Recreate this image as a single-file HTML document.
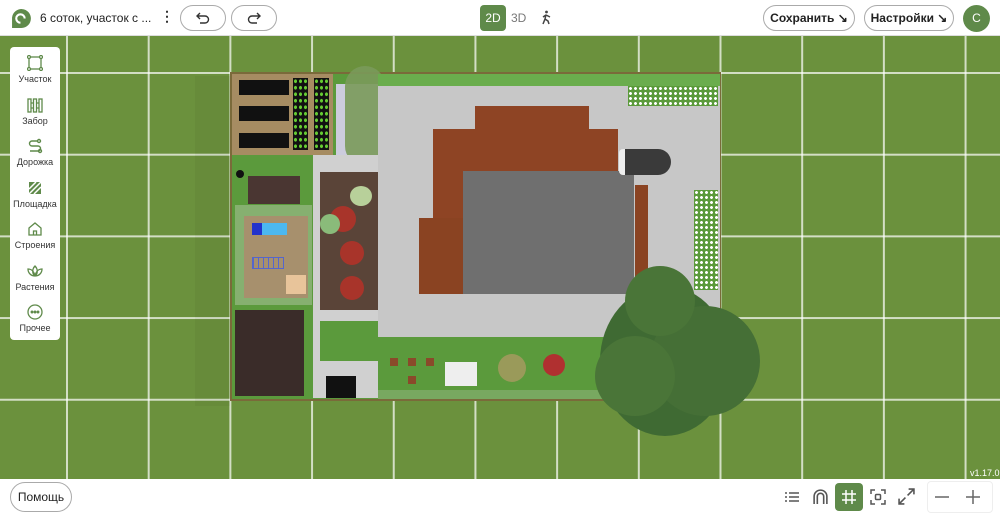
<!DOCTYPE html>
<html><head><meta charset="utf-8">
<style>
*{margin:0;padding:0;box-sizing:border-box}
body{width:1000px;height:515px;overflow:hidden;font-family:"Liberation Sans",sans-serif;background:#fff;position:relative}
.a{position:absolute}
#map{position:absolute;left:0;top:36px;width:1000px;height:443px;background-color:#6b913d;
background-image:linear-gradient(90deg,rgba(255,255,255,.7) 2px,transparent 2px),linear-gradient(rgba(255,255,255,.7) 2px,transparent 2px);
background-size:81.7px 81.7px;background-position:66px 36px}
.top{position:absolute;left:0;top:0;width:1000px;height:36px;background:#fff;border-bottom:1px solid #ddd}
.pill{position:absolute;border:1px solid #aaa;border-radius:14px;background:#fff;font-size:12px;font-weight:bold;color:#222;display:flex;align-items:center;justify-content:center}
.side{position:absolute;left:10px;top:47px;width:50px;height:293px;background:#fff;border-radius:4px}
.it{position:absolute;left:0;width:50px;text-align:center;font-size:9px;color:#333}
.it svg{display:block;margin:0 auto 3px}
.bot{position:absolute;left:0;top:479px;width:1000px;height:36px;background:#fff}
</style></head><body>
<div id="map">
 <div class="a" style="left:195px;top:40px;width:35px;height:330px;background:rgba(0,0,0,.035)"></div>
 <div class="a" style="left:230px;top:36px;width:491px;height:329px;background:#5b9a3c;border:2px solid #7a6a3a"></div>
 <div class="a" style="left:232px;top:38px;width:101px;height:81px;background:#a68c62"></div>
 <div class="a" style="left:239px;top:44px;width:50px;height:15px;background:#111"></div>
 <div class="a" style="left:239px;top:70px;width:50px;height:15px;background:#111"></div>
 <div class="a" style="left:239px;top:97px;width:50px;height:15px;background:#111"></div>
 <div class="a" style="left:293px;top:42px;width:15px;height:72px;background:#111;background-image:radial-gradient(#6c3 1.3px,transparent 1.6px);background-size:5px 6.5px"></div>
 <div class="a" style="left:314px;top:42px;width:15px;height:72px;background:#111;background-image:radial-gradient(#6c3 1.3px,transparent 1.6px);background-size:5px 6.5px"></div>
 <div class="a" style="left:336px;top:48px;width:42px;height:80px;background:#ccd;"></div>
 <div class="a" style="left:345px;top:30px;width:40px;height:100px;background:#7a9a5a;border-radius:20px;opacity:.9"></div>
 <div class="a" style="left:378px;top:38px;width:342px;height:14px;background:#6aad4d"></div>
 <div class="a" style="left:378px;top:50px;width:342px;height:251px;background:#c7c7c7"></div>
 <div class="a" style="left:628px;top:50px;width:90px;height:20px;background:#5a9a3a;background-image:radial-gradient(#fff 1.3px,transparent 1.6px);background-size:5px 5px"></div>
 <div class="a" style="left:694px;top:154px;width:24px;height:100px;background:#5a9a3a;background-image:radial-gradient(#fff 1.3px,transparent 1.6px);background-size:5px 5px"></div>
 <div class="a" style="left:475px;top:70px;width:114px;height:25px;background:#8e4424"></div>
 <div class="a" style="left:433px;top:93px;width:185px;height:42px;background:#8e4424"></div>
 <div class="a" style="left:433px;top:133px;width:31px;height:88px;background:#8e4424"></div>
 <div class="a" style="left:419px;top:182px;width:44px;height:76px;background:#8a4322"></div>
 <div class="a" style="left:635px;top:149px;width:13px;height:96px;background:#8a4322"></div>
 <div class="a" style="left:463px;top:135px;width:171px;height:123px;background:#6f6f6f"></div>
 <div class="a" style="left:619px;top:113px;width:52px;height:26px;background:#3a3a3a;border-radius:4px 13px 13px 4px;border-left:6px solid #eee"></div>
 <div class="a" style="left:248px;top:140px;width:52px;height:28px;background:#4a3632"></div>
 <div class="a" style="left:236px;top:134px;width:8px;height:8px;background:#111;border-radius:50%"></div>
 <div class="a" style="left:235px;top:169px;width:77px;height:100px;background:#86b070"></div>
 <div class="a" style="left:244px;top:180px;width:64px;height:82px;background:#a7906d"></div>
 <div class="a" style="left:252px;top:187px;width:35px;height:12px;background:#4cb8f0;border-left:10px solid #2233cc"></div>
 <div class="a" style="left:252px;top:221px;width:32px;height:12px;border:1px solid #5566cc;background:repeating-linear-gradient(90deg,#5566cc 0 1px,transparent 1px 5px)"></div>
 <div class="a" style="left:286px;top:239px;width:20px;height:19px;background:#e8c49a"></div>
 <div class="a" style="left:235px;top:274px;width:69px;height:86px;background:#3a2c29"></div>
 <div class="a" style="left:313px;top:119px;width:65px;height:243px;background:#d0d0d0"></div>
 <div class="a" style="left:320px;top:136px;width:58px;height:138px;background:#5a4438"></div>
 <div class="a" style="left:330px;top:170px;width:26px;height:26px;background:#a8342a;border-radius:50%"></div>
 <div class="a" style="left:340px;top:205px;width:24px;height:24px;background:#a8342a;border-radius:50%"></div>
 <div class="a" style="left:340px;top:240px;width:24px;height:24px;background:#a8342a;border-radius:50%"></div>
 <div class="a" style="left:350px;top:150px;width:22px;height:20px;background:#b8d09a;border-radius:50%"></div>
 <div class="a" style="left:320px;top:178px;width:20px;height:20px;background:#8abb7a;border-radius:50%"></div>
 <div class="a" style="left:320px;top:285px;width:58px;height:40px;background:#5b9a3c"></div>
 <div class="a" style="left:326px;top:340px;width:30px;height:22px;background:#111"></div>
 <div class="a" style="left:378px;top:301px;width:342px;height:54px;background:#5b9a3c"></div>
 <div class="a" style="left:378px;top:354px;width:240px;height:9px;background:#78a860"></div>
 <div class="a" style="left:445px;top:326px;width:32px;height:24px;background:#eee"></div>
 <div class="a" style="left:390px;top:322px;width:8px;height:8px;background:#8a4a2a"></div>
 <div class="a" style="left:408px;top:322px;width:8px;height:8px;background:#8a4a2a"></div>
 <div class="a" style="left:426px;top:322px;width:8px;height:8px;background:#8a4a2a"></div>
 <div class="a" style="left:408px;top:340px;width:8px;height:8px;background:#8a4a2a"></div>
 <div class="a" style="left:498px;top:318px;width:28px;height:28px;background:#9a9a5a;border-radius:50%"></div>
 <div class="a" style="left:543px;top:318px;width:22px;height:22px;background:#b03030;border-radius:50%"></div>
 <div class="a" style="left:600px;top:250px;width:130px;height:150px;background:#3f6a33;border-radius:50%"></div>
 <div class="a" style="left:650px;top:270px;width:110px;height:110px;background:#456f36;border-radius:50%"></div>
 <div class="a" style="left:595px;top:300px;width:80px;height:80px;background:#4a7538;border-radius:50%"></div>
 <div class="a" style="left:625px;top:230px;width:70px;height:70px;background:#4a7538;border-radius:50%"></div>
 <div class="a" style="left:970px;top:432px;font-size:9px;color:#fff">v1.17.0</div>
</div>

<div class="top">
 <svg class="a" style="left:11px;top:8px" width="21" height="21" viewBox="0 0 20 20"><path d="M1 19V9a9 9 0 1 1 9 10z" fill="#5f8a4a"/><path d="M9 14a4 4 0 1 1 4-4" stroke="#fff" stroke-width="2" fill="none"/></svg>
 <div class="a" style="left:40px;top:11px;font-size:12px;color:#222">6 соток, участок с ...</div>
 <div class="a" style="left:160px;top:8px;font-size:14px;font-weight:bold;color:#333">&#8942;</div>
 <div class="pill" style="left:180px;top:5px;width:46px;height:26px"><svg width="14" height="12" viewBox="0 0 14 12" fill="none" stroke="#333" stroke-width="1.4"><path d="M4 1L1 4l3 3M1 4h8a3.5 3.5 0 0 1 0 7H4"/></svg></div>
 <div class="pill" style="left:231px;top:5px;width:46px;height:26px"><svg width="14" height="12" viewBox="0 0 14 12" fill="none" stroke="#333" stroke-width="1.4"><path d="M10 1l3 3-3 3M13 4H5a3.5 3.5 0 0 0 0 7h5"/></svg></div>
 <div class="a" style="left:480px;top:5px;width:26px;height:26px;background:#5f8a4a;border-radius:4px;color:#fff;font-size:12px;text-align:center;line-height:26px">2D</div>
 <div class="a" style="left:511px;top:11px;font-size:12px;color:#777">3D</div>
 <svg class="a" style="left:540px;top:10px" width="12" height="15" viewBox="0 0 12 15" fill="none" stroke="#444" stroke-width="1.5"><circle cx="6.5" cy="2" r="1.4" fill="#444" stroke="none"/><path d="M6 4.5L5 9l-2 5M5 9l3 2 1 3M6 5l-3 2M6 5l4 2"/></svg>
 <div class="pill" style="left:763px;top:5px;width:92px;height:26px">Сохранить &#8600;</div>
 <div class="pill" style="left:864px;top:5px;width:90px;height:26px">Настройки &#8600;</div>
 <div class="a" style="left:963px;top:5px;width:27px;height:27px;border-radius:50%;background:#5f8a4a;color:#fff;font-size:12px;text-align:center;line-height:27px">C</div>
</div>

<div class="side">
 <div class="it" style="top:8px"><svg width="16" height="16" viewBox="0 0 16 16" fill="none" stroke="#5f8a4a" stroke-width="1.3"><rect x="2" y="2" width="12" height="12"/><circle cx="2" cy="2" r="1.5" fill="#fff"/><circle cx="14" cy="2" r="1.5" fill="#fff"/><circle cx="2" cy="14" r="1.5" fill="#fff"/><circle cx="14" cy="14" r="1.5" fill="#fff"/></svg>Участок</div>
 <div class="it" style="top:50px"><svg width="16" height="16" viewBox="0 0 16 16" fill="none" stroke="#5f8a4a" stroke-width="1.3"><rect x="1" y="2" width="3" height="13"/><rect x="6.5" y="2" width="3" height="13"/><rect x="12" y="2" width="3" height="13"/><path d="M4 6h2.5M4 11h2.5M9.5 6H12M9.5 11H12"/></svg>Забор</div>
 <div class="it" style="top:91px"><svg width="16" height="16" viewBox="0 0 16 16" fill="none" stroke="#5f8a4a" stroke-width="1.4"><path d="M10 3H5a2.5 2.5 0 0 0 0 5h6a2.5 2.5 0 0 1 0 5H3"/><circle cx="12" cy="3" r="1.5"/><circle cx="13" cy="13" r="1.5"/></svg>Дорожка</div>
 <div class="it" style="top:133px"><svg width="16" height="16" viewBox="0 0 16 16"><rect x="2" y="2" width="12" height="12" fill="#5f8a4a"/><path d="M2 9l7-7M2 14L14 2M7 14l7-7" stroke="#fff" stroke-width="1.5"/></svg>Площадка</div>
 <div class="it" style="top:174px"><svg width="16" height="16" viewBox="0 0 16 16" fill="none" stroke="#5f8a4a" stroke-width="1.3"><path d="M2 7l6-5 6 5v7H2z"/><path d="M6.5 14V10h3v4"/></svg>Строения</div>
 <div class="it" style="top:216px"><svg width="16" height="16" viewBox="0 0 16 16" fill="none" stroke="#5f8a4a" stroke-width="1.3"><path d="M8 13C5 11 5 6 8 3c3 3 3 8 0 10zM8 13C4 13 1 10 1 6c3 0 6 2 7 7zM8 13c4 0 7-3 7-7-3 0-6 2-7 7z"/></svg>Растения</div>
 <div class="it" style="top:257px"><svg width="16" height="16" viewBox="0 0 16 16" fill="none" stroke="#5f8a4a" stroke-width="1.3"><circle cx="8" cy="8" r="7"/><circle cx="5" cy="8" r=".8" fill="#5f8a4a"/><circle cx="8" cy="8" r=".8" fill="#5f8a4a"/><circle cx="11" cy="8" r=".8" fill="#5f8a4a"/></svg>Прочее</div>
</div>

<div class="bot">
 <div class="pill" style="left:10px;top:3px;width:62px;height:30px;font-weight:normal;font-size:12px;border-radius:15px">Помощь</div>
 <svg class="a" style="left:784px;top:10px" width="16" height="16" viewBox="0 0 16 16" stroke="#555" stroke-width="1.6"><path d="M5 4h10M5 8h10M5 12h10M1 4h2M1 8h2M1 12h2"/></svg>
 <svg class="a" style="left:812px;top:9px" width="17" height="17" viewBox="0 0 16 16" fill="none" stroke="#555" stroke-width="1.5"><path d="M2 15V8a6 6 0 0 1 12 0v7M5 15V8a3 3 0 0 1 6 0v7"/></svg>
 <div class="a" style="left:835px;top:4px;width:28px;height:28px;background:#5f8a4a;border-radius:4px"></div>
 <svg class="a" style="left:841px;top:10px" width="16" height="16" viewBox="0 0 16 16" stroke="#fff" stroke-width="1.5"><path d="M5 1v14M11 1v14M1 5h14M1 11h14"/></svg>
 <svg class="a" style="left:870px;top:10px" width="16" height="16" viewBox="0 0 16 16" fill="none" stroke="#555" stroke-width="1.5"><path d="M1 5V1h4M11 1h4v4M15 11v4h-4M5 15H1v-4"/><rect x="5.5" y="5.5" width="5" height="5" rx="1"/></svg>
 <svg class="a" style="left:898px;top:9px" width="17" height="17" viewBox="0 0 16 16" fill="none" stroke="#555" stroke-width="1.5"><path d="M10 1h5v5M15 1L9 7M6 15H1v-5M1 15l6-6"/></svg>
 <div class="a" style="left:927px;top:2px;width:66px;height:32px;border:1px solid #eee;border-radius:4px"></div>
 <svg class="a" style="left:934px;top:10px" width="16" height="16" viewBox="0 0 16 16" stroke="#666" stroke-width="1.5"><path d="M1 8h14"/></svg>
 <svg class="a" style="left:965px;top:10px" width="16" height="16" viewBox="0 0 16 16" stroke="#666" stroke-width="1.5"><path d="M1 8h14M8 1v14"/></svg>
</div>
</body></html>
